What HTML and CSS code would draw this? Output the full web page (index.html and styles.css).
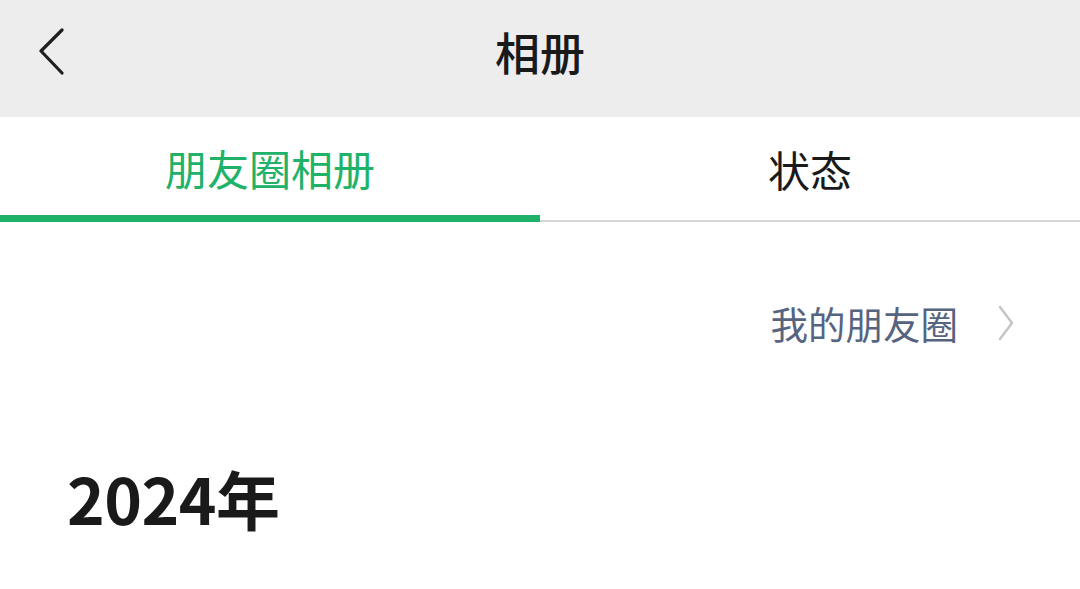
FILE: index.html
```html
<!DOCTYPE html>
<html lang="zh-CN">
<head>
<meta charset="utf-8">
<title>相册</title>
<link rel="stylesheet" href="styles.css">
</head>
<body>
<header class="topbar">
  <button class="back" aria-label="返回">
    <svg width="30" height="48" viewBox="0 0 30 48"><polyline points="24,2 3,23 24,45" fill="none" stroke="#1f1f1f" stroke-width="3.2" stroke-linecap="round" stroke-linejoin="round"/></svg>
  </button>
  <h1 class="title">相册</h1>
</header>
<nav class="tabs">
  <div class="tab active">朋友圈相册</div>
  <div class="tab">状态</div>
</nav>
<main class="content">
  <div class="moments-link">
    <span class="moments-text">我的朋友圈</span>
    <svg class="arrow" width="16" height="36" viewBox="0 0 16 36"><polyline points="2,2 14,18 2,34" fill="none" stroke="#c4c4c4" stroke-width="2.4" stroke-linecap="round" stroke-linejoin="round"/></svg>
  </div>
  <div class="year">2024年</div>
</main>
</body>
</html>
```
FILE: styles.css
```css
* { box-sizing: border-box; }
html, body { margin: 0; padding: 0; }
body {
  width: 1080px;
  height: 589px;
  overflow: hidden;
  background: #ffffff;
  font-family: "Noto Sans CJK SC", "Noto Sans", sans-serif;
  color: #1a1a1a;
}
.topbar {
  position: relative;
  height: 117px;
  background: #ededed;
  display: flex;
  align-items: center;
  justify-content: center;
}
.back {
  position: absolute;
  left: 38px;
  top: 28px;
  border: 0;
  padding: 0;
  background: none;
  display: flex;
}
.title {
  margin: 0;
  margin-top: -14px;
  font-size: 45px;
  font-weight: 500;
  color: #1a1a1a;
  line-height: 1;
}
.tabs {
  display: flex;
  height: 105px;
  border-bottom: 2px solid #d6d6d6;
}
.tab {
  flex: 1;
  display: flex;
  align-items: center;
  justify-content: center;
  padding-bottom: 0;
  font-size: 42px;
  color: #1a1a1a;
  line-height: 1;
}
.tab.active {
  color: #20b268;
  border-bottom: 7px solid #1fb068;
  margin-bottom: -2px;
  padding-top: 4px;
}
.content {
  padding: 0 66px 0 67px;
}
.moments-link {
  display: flex;
  justify-content: flex-end;
  align-items: center;
  gap: 40px;
  margin-top: 79px;
  height: 44px;
}
.moments-text {
  font-size: 37.5px;
  color: #56647f;
  line-height: 1;
}
.arrow { display: block; }
.year {
  margin-top: 120px;
  font-size: 64px;
  font-weight: 700;
  line-height: 1;
  color: #1a1a1a;
  letter-spacing: -0.5px;
}
```
